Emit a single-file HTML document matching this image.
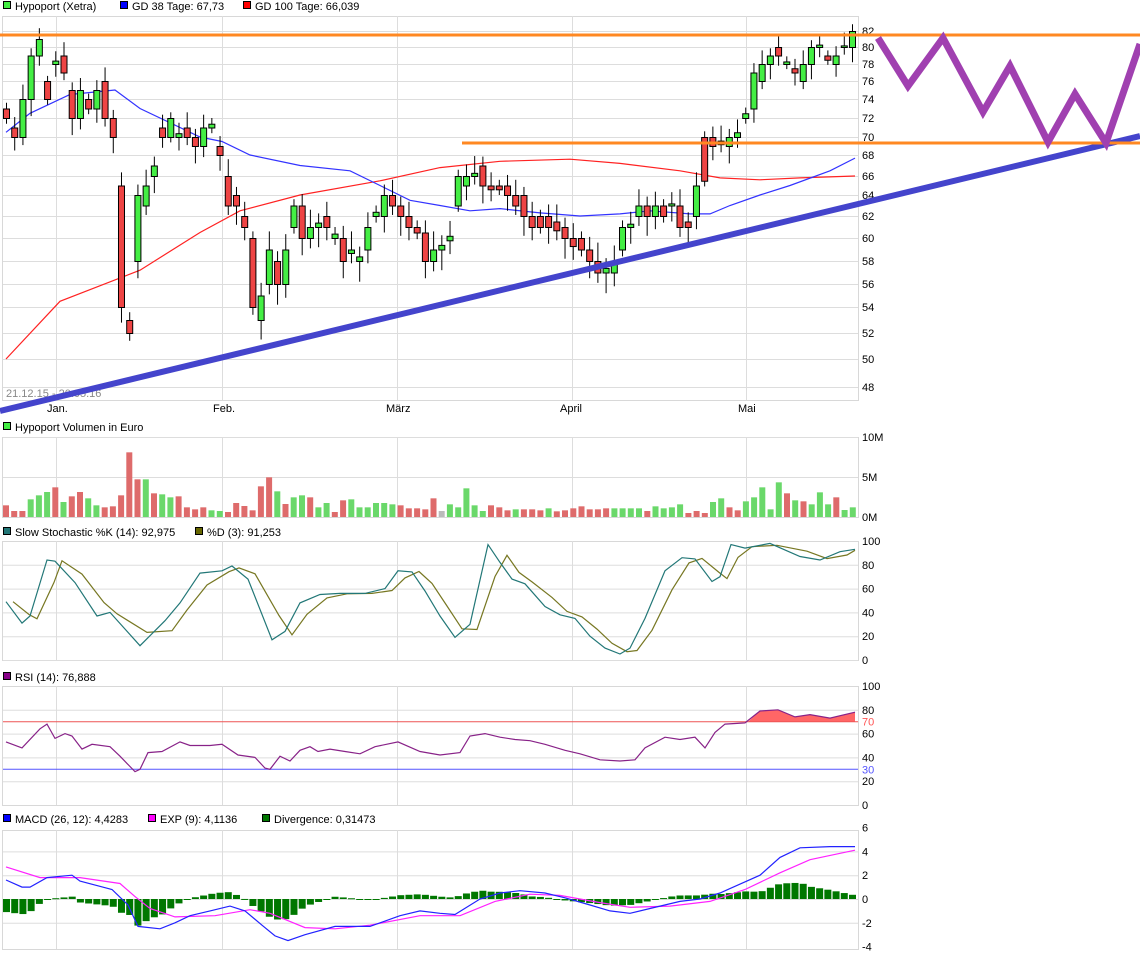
<!DOCTYPE html>
<html><head><meta charset="utf-8">
<style>
html,body{margin:0;padding:0;background:#fff;}
svg{display:block;font-family:"Liberation Sans",sans-serif;font-size:11px;}
</style></head><body>
<svg id="s" width="1140" height="958" xmlns="http://www.w3.org/2000/svg"></svg>
<script>
const S=document.getElementById('s');let h='';
const P={82:31,80:47,78:64,76:81,74:99,72:118,70:137,68:155,66:176,64:195,62:216,60:238,58:261,56:284,54:307,52:333,50:359,48:387};
function py(v){let lo=Math.floor(v/2)*2;if(lo<48)lo=48;if(lo>80)lo=80;const a=P[lo],b=P[lo+2];return a+(b-a)*(v-lo)/2;}
function rect(x,y,w,hh,f,st){h+=`<rect x="${x}" y="${y}" width="${w}" height="${hh}" fill="${f}"${st?` stroke="${st}"`:''}/>`;}
function line(x1,y1,x2,y2,c,w){h+=`<line x1="${x1}" y1="${y1}" x2="${x2}" y2="${y2}" stroke="${c}" stroke-width="${w||1}"/>`;}
function txt(x,y,t,c){h+=`<text x="${x}" y="${y}" fill="${c||'#000'}">${t}</text>`;}
function leg(x,y,c,t){rect(x+.5,y-8.5,7,7,c,'#000');txt(x+12,y,t);}
const vx=[56,222,397,572,746];
function panel(y0,y1,hl){rect(2.5,y0+.5,856,y1-y0,'#fff','#d8d8d8');hl.forEach(y=>line(3,y+.5,858,y+.5,'#ddd'));vx.forEach(x=>line(x+.5,y0,x+.5,y1,'#ddd'));}
// main
panel(16,400,Object.values(P));
Object.entries(P).forEach(([k,y])=>txt(862,y+4,k));
[['Jan.',47],['Feb.',213],['März',386],['April',560],['Mai',738]].forEach(a=>txt(a[1],412,a[0]));
txt(6,397,'21.12.15 - 20.05.16','#888');
leg(3,10,'#44ee44','Hypoport (Xetra)');leg(120,10,'#0000ff','GD 38 Tage: 67,73');leg(243,10,'#ff0000','GD 100 Tage: 66,039');
const C=[[73,72],[71,70],[70,74],[74,79],[79,81],[76,74],[78,78.4],[79,77],[75,72],[72,75],[74,73],[73,75],[76,72],[72,70],[65,54],[53,52],[58,64],[63,65],[66,67],[71,70],[70,72],[70,70.4],[71,70],[70,69],[69,71],[71,71.4],[69,68],[66,63],[64,63],[62,61],[60,54],[53,55],[56,59],[58,56],[56,59],[61,63],[63,60],[60,61],[61,61.4],[62,61],[60,60.4],[60,58],[58.7,59],[58,58.4],[59,61],[62,62.4],[62,64],[64,63],[63,62],[62,61],[61,60.5],[60.5,58],[58,59],[59,59.4],[59.8,60.2],[63,66],[65,66],[66,66.3],[67,65],[65,64.6],[65,64.6],[65,64],[64,63],[64,62],[62,61],[62,61],[62,61],[61.5,60.7],[61,60],[60,59.3],[60,59],[59,58],[58,57],[57,57.4],[57,58],[59,61],[61,61.3],[62,63],[63,62],[62,63],[63,62],[63,63.2],[63,61],[61.5,61],[62,65],[70,65.5],[70,69],[69.6,69.2],[69,70],[70,70.5],[72,72.5],[73,77],[76,78],[78,79],[80,79],[78,78.3],[77.5,77],[76,78],[78,80],[80,80.3],[79,78.5],[78,79],[80,80.2],[80,82]];
const N=C.length, sp=(852-6)/(N-1), X=i=>6+i*sp;
// MAs
function poly(pts,c,w,fy){h+=`<polyline fill="none" stroke="${c}" stroke-width="${w||1}" points="${pts.map(p=>p[0]+','+(fy?fy(p[1]):p[1]).toFixed(1)).join(' ')}"/>`;}
poly([[6,50],[60,54.5],[140,57.2],[200,60.5],[240,62.5],[300,64],[380,65.5],[440,66.8],[500,67.4],[570,67.6],[620,67.2],[680,66.5],[720,65.8],[760,65.6],[800,65.8],[855,66]],'#ff2222',1.2,py);
poly([[6,70.5],[30,72.5],[70,74.5],[115,75],[140,73],[200,70],[222,69.5],[250,68],[300,67],[350,66.5],[380,65],[410,63.5],[440,63],[470,62.5],[500,62.7],[540,62.3],[580,62],[620,62.2],[650,62.5],[690,62.2],[710,62.2],[730,63],[760,64],[790,65],[830,66.5],[855,67.7]],'#3333ff',1.2,py);
C.forEach((c,i)=>{const x=X(i),o=c[0],cl=c[1],hi=Math.max(o,cl)+0.6+((i*7)%5)*0.25,lo=Math.min(o,cl)-0.6-((i*3)%5)*0.3;
line(x+.5,py(hi),x+.5,py(lo),'#000');const t=py(Math.max(o,cl)),b=py(Math.min(o,cl));
rect(x-3+.5,t+.5,6,Math.max(1,b-t),cl>=o?'#44ee44':'#ee4444','#000');});
// trend & lines
line(0,411,1140,136,'#4444cc',6);
line(0,35,1140,35,'#ff8822',3);line(462,143,1140,143,'#ff8822',3);
h+=`<polyline fill="none" stroke="#a040b0" stroke-width="7" points="878,38 908,86 943,38 983,112 1010,66 1048,142 1075,94 1106,143 1140,44"/>`;
// volume
panel(437,517,[437,477]);
[['10M',441],['5M',481],['0M',521]].forEach(a=>txt(862,a[1],a[0]));
leg(3,431,'#44ee44','Hypoport Volumen in Euro');
const V='r255,r272,r272,g237,g225,g215,r201,g245,r228,r215,g234,g255,r261,r258,r225,r96,r177,g177,r219,g222,g231,r228,r261,r267,r261,g270,g272,r275,r248,r257,r270,r198,r171,g213,r251,g231,g225,r231,g261,g248,r275,r240,g237,g261,g261,g248,g248,g252,r255,r264,r264,r267,r234,x272,g252,g261,g204,g255,g272,r255,r261,r270,g267,r267,r267,r270,g264,r273,r270,r264,r258,r267,r267,r264,g264,g264,g264,g264,r272,g258,g264,g261,g252,r278,r272,r278,g245,g234,r261,r270,g243,g231,g201,g267,g186,r219,g240,r243,g252,g216,g252,r231,g269,g261'.split(',');
V.forEach((v,i)=>{const x=3+i*(855/V.length);const hh=(290-+v.slice(1))/3;rect(x.toFixed(1),517-hh,6,hh,v[0]=='g'?'#6ad86a':v[0]=='r'?'#de6b6b':'#bbb');});
// stochastic
const sy=v=>660-v*1.19;
panel(541,660,[0,20,40,60,80].map(sy));
[0,20,40,60,80,100].forEach(v=>txt(862,sy(v)+4,v));
leg(3,536,'#227777','Slow Stochastic %K (14): 92,975');leg(195,536,'#666600','%D (3): 91,253');
const K=[[6,49],[22,31],[30,37],[47,84],[55,83],[75,65],[97,37],[110,40],[140,12],[165,33],[180,48],[200,73],[222,75],[232,79],[248,68],[272,17],[285,24],[300,48],[320,55],[340,56],[365,56],[385,60],[398,75],[412,74],[425,58],[440,37],[455,19],[470,30],[488,97],[500,82],[512,68],[525,64],[545,45],[560,38],[575,35],[590,20],[605,10],[620,5],[630,10],[645,35],[665,75],[682,86],[695,85],[712,66],[720,70],[731,97],[745,94],[770,98],[800,87],[820,84],[840,91],[855,93]];
const D=K.map((p,i)=>[Math.min(855,p[0]+7),i>0?(p[1]*0.6+K[i-1][1]*0.4):p[1]]);
poly(D,'#777722',1.2,sy);poly(K,'#227777',1.2,sy);
// RSI
const ry=v=>805-v*1.19;
panel(686,805,[20,40,60,80].map(ry));
[0,20,40,60,80,100].forEach(v=>txt(862,ry(v)+4,v));
txt(862,ry(70)+4,'70','#ff5555');txt(862,ry(30)+4,'30','#5555ff');
leg(3,681,'#880088','RSI (14): 76,888');
const R=[[6,53],[22,48],[40,64],[47,68],[55,56],[65,60],[72,58],[82,47],[92,51],[110,49],[120,41],[135,28],[140,30],[148,44],[162,45],[180,53],[190,50],[210,50],[222,51],[238,42],[255,40],[265,31],[270,30],[280,41],[290,37],[300,46],[310,49],[318,45],[330,47],[345,45],[360,43],[375,49],[398,53],[420,45],[440,42],[460,44],[470,58],[485,60],[500,57],[515,55],[530,54],[545,51],[565,46],[580,43],[600,38],[620,37],[635,38],[645,48],[665,57],[680,55],[695,57],[705,48],[715,61],[725,68],[745,69],[760,79],[778,80],[795,74],[810,76],[830,73],[855,78]];
h+=`<polygon fill="#ff6666" points="748,${ry(70)} 760,${ry(79)} 778,${ry(80)} 795,${ry(74)} 810,${ry(76)} 830,${ry(73)} 855,${ry(78)} 855,${ry(70)}"/>`;
line(3,ry(70),858,ry(70),'#ee5555');line(3,ry(30),858,ry(30),'#5555ff');
poly(R,'#882288',1.2,ry);
// MACD
const my=v=>899-v*11.9;
panel(830,949,[-2,0,2,4].map(my));
[6,4,2,0,-2,-4].forEach(v=>txt(862,my(v)+4,v));
leg(3,823,'#0000ff','MACD (26, 12): 4,4283');leg(148,823,'#ff00ff','EXP (9): 4,1136');leg(262,823,'#007700','Divergence: 0,31473');
const M=[[6,1.6],[22,1.0],[30,1.0],[47,1.8],[72,2.0],[80,1.5],[112,0.8],[128,-0.5],[138,-2.3],[160,-2.5],[175,-2.0],[190,-1.4],[210,-1.0],[230,-0.6],[245,-1.0],[262,-2.2],[275,-3.1],[288,-3.5],[305,-3.0],[335,-2.3],[370,-2.3],[400,-1.4],[420,-1.0],[440,-1.2],[455,-1.3],[480,0.0],[500,0.5],[520,0.7],[545,0.5],[565,0.1],[590,-0.5],[610,-1.0],[630,-1.2],[650,-0.8],[680,-0.2],[700,0.0],[720,0.5],[760,2.0],[780,3.5],[800,4.3],[830,4.4],[855,4.4]];
const E=[[6,2.7],[40,1.8],[80,1.8],[120,1.3],[135,0.2],[150,-0.8],[175,-1.5],[215,-1.4],[250,-0.9],[270,-1.2],[305,-2.4],[335,-2.5],[370,-2.2],[420,-1.4],[460,-1.4],[495,-0.2],[530,0.4],[560,0.3],[600,-0.3],[630,-0.7],[670,-0.6],[710,-0.2],[745,0.8],[780,2.2],[810,3.3],[855,4.1]];
function itp(A,x){for(let i=1;i<A.length;i++)if(x<=A[i][0]){const a=A[i-1],b=A[i];return a[1]+(b[1]-a[1])*(x-a[0])/(b[0]-a[0]);}return A[A.length-1][1];}
for(let i=0;i<N;i++){const x=X(i);const d=itp(M,x)-itp(E,x);const y0=my(0),y1=my(d);rect(x-3,Math.min(y0,y1),7,Math.max(1,Math.abs(y1-y0)),'#007700');}
poly(E,'#ff22ff',1.2,my);poly(M,'#2222ff',1.2,my);
S.innerHTML=h;
</script>
</body></html>
